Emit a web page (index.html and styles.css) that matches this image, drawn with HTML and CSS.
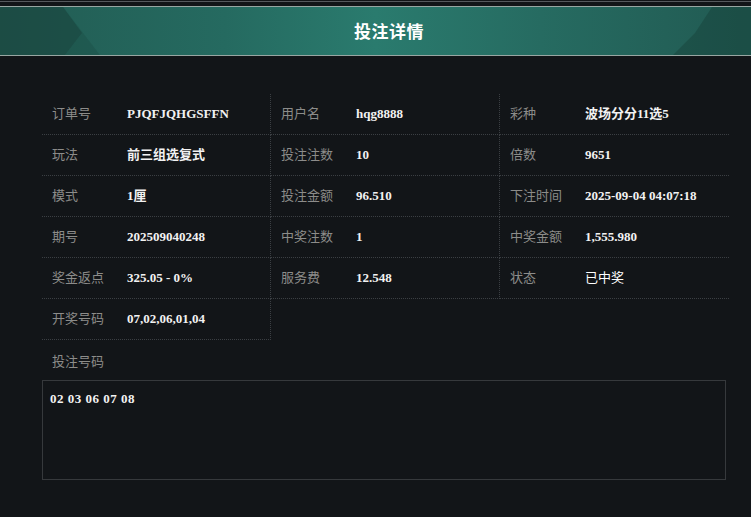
FILE: index.html
```html
<!DOCTYPE html>
<html lang="zh">
<head>
<meta charset="utf-8">
<title>投注详情</title>
<link rel="stylesheet" href="styles.css">
</head>
<body>
<div class="topline"></div>
<header class="header">
  <svg class="deco" viewBox="0 0 751 48" preserveAspectRatio="none" aria-hidden="true">
    <polygon points="0,0 63,0 82,26 65,48 0,48" fill="#153b35" fill-opacity="0.5"/>
    <polygon points="63,0 82,26 65,48 100,48" fill="#1a4a43" fill-opacity="0.35"/>
    <polygon points="751,0 712,0 695,26 673,48 751,48" fill="#153b35" fill-opacity="0.4"/>
  </svg>
  <h1 class="title">投注详情</h1>
</header>
<main class="content">
  <div class="grid">
    <div class="cell"><span class="label">订单号</span><span class="value">PJQFJQHGSFFN</span></div>
    <div class="cell"><span class="label">用户名</span><span class="value">hqg8888</span></div>
    <div class="cell"><span class="label">彩种</span><span class="value">波场分分11选5</span></div>

    <div class="cell"><span class="label">玩法</span><span class="value">前三组选复式</span></div>
    <div class="cell"><span class="label">投注注数</span><span class="value">10</span></div>
    <div class="cell"><span class="label">倍数</span><span class="value">9651</span></div>

    <div class="cell"><span class="label">模式</span><span class="value">1厘</span></div>
    <div class="cell"><span class="label">投注金额</span><span class="value">96.510</span></div>
    <div class="cell"><span class="label">下注时间</span><span class="value">2025-09-04 04:07:18</span></div>

    <div class="cell"><span class="label">期号</span><span class="value">202509040248</span></div>
    <div class="cell"><span class="label">中奖注数</span><span class="value">1</span></div>
    <div class="cell"><span class="label">中奖金额</span><span class="value">1,555.980</span></div>

    <div class="cell"><span class="label">奖金返点</span><span class="value">325.05 - 0%</span></div>
    <div class="cell"><span class="label">服务费</span><span class="value">12.548</span></div>
    <div class="cell"><span class="label">状态</span><span class="value status">已中奖</span></div>

    <div class="cell"><span class="label">开奖号码</span><span class="value">07,02,06,01,04</span></div>
  </div>
  <div class="codes-label">投注号码</div>
  <div class="codes-box">02 03 06 07 08</div>
</main>
</body>
</html>
```
FILE: styles.css
```css
html, body {
  margin: 0;
  padding: 0;
  background: #121518;
}
body {
  width: 751px;
  height: 517px;
  overflow: hidden;
  font-family: "Liberation Serif", "Noto Sans CJK SC", serif;
}
.topline {
  margin-top: 1px;
  height: 1px;
  background: #55595d;
  margin-bottom: 4px;
}
.header {
  position: relative;
  height: 48px;
  border-top: 1px solid #98a6a2;
  border-bottom: 1px solid #98a6a2;
  background: linear-gradient(90deg, #225c53 0%, #256a60 30%, #2a7b6e 50%, #266b61 72%, #215a52 100%);
  display: flex;
  align-items: center;
  justify-content: center;
  padding-left: 27px;
  overflow: hidden;
}
.deco {
  position: absolute;
  left: 0;
  top: 0;
  width: 100%;
  height: 100%;
}
.title {
  position: relative;
  margin: 0;
  font-family: "Noto Sans CJK SC", sans-serif;
  font-size: 17px;
  line-height: 20px;
  font-weight: 700;
  color: #ffffff;
  letter-spacing: 0.5px;
}
.content {
  padding: 38px 0 0 42px;
}
.grid {
  display: grid;
  grid-template-columns: 229px 229px 229px;
  width: 687px;
}
.cell {
  height: 40px;
  display: flex;
  align-items: center;
  border-bottom: 1px dotted #3b3f43;
  border-right: 1px dotted #3b3f43;
}
.cell:nth-child(3n) {
  border-right: none;
}
.cell:nth-child(3n+1),
.cell:nth-child(3n+2) {
  width: 228px;
}
.label {
  width: 75px;
  flex: none;
  padding-left: 10px;
  font-family: "Noto Sans CJK SC", sans-serif;
  font-size: 13px;
  line-height: 16px;
  color: #8c8c8a;
  position: relative;
  top: -1px;
}
.value {
  font-size: 13px;
  line-height: 16px;
  font-weight: 700;
  color: #f2f2f2;
}
.value.status {
  font-family: "Noto Sans CJK SC", sans-serif;
  font-weight: 400;
  color: #ffffff;
  position: relative;
  top: -1px;
}
.codes-label {
  height: 40px;
  display: flex;
  align-items: center;
  padding-left: 10px;
  font-family: "Noto Sans CJK SC", sans-serif;
  font-size: 13px;
  color: #8c8c8a;
}
.codes-box {
  width: 668px;
  height: 86px;
  border: 1px solid #36393c;
  padding: 10px 7px 2px 7px;
  font-size: 13px;
  line-height: 15px;
  font-weight: 700;
  color: #f2f2f2;
  letter-spacing: 0.5px;
}
```
